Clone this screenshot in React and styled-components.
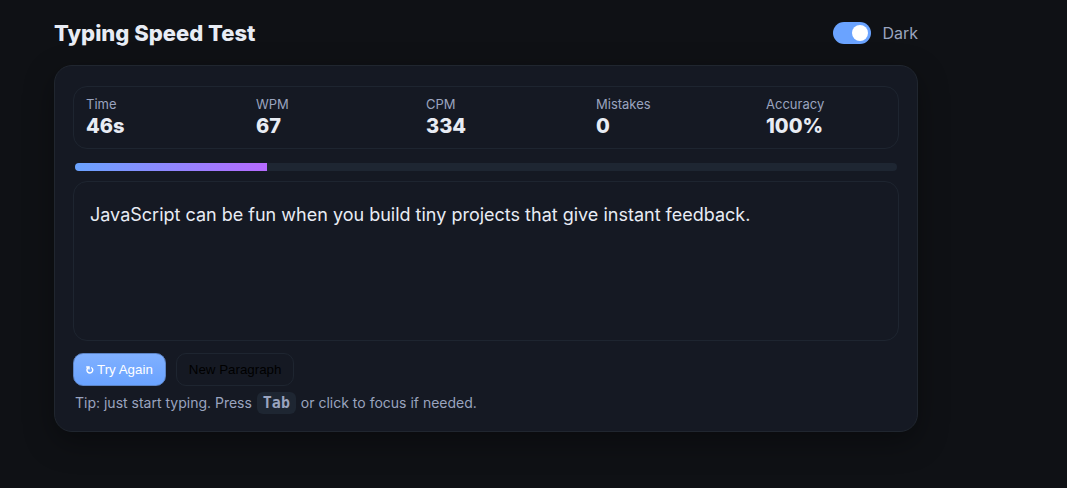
import React, { useState } from "react";
import styled, { createGlobalStyle } from "styled-components";

const GlobalStyle = createGlobalStyle`
  * { box-sizing: border-box; }
  html { min-height: 100%; background: #0f1115; }
  body {
    margin: 0;
    color: #e8ecf4;
    font-family: Inter, "Liberation Sans", sans-serif;
    font-size: 16px;
    line-height: 24px;
  }
`;

const Page = styled.main`
  padding: 20px 149px 56px 54px;
`;

const Header = styled.header`
  display: flex;
  align-items: center;
  justify-content: space-between;
  margin-bottom: 19px;
`;

const Title = styled.h1`
  margin: 0;
  font-size: 22px;
  line-height: 26px;
  font-weight: 800;
`;

const ThemeToggle = styled.label`
  display: flex;
  align-items: center;
  gap: 11px;
  color: #9aa4bf;
  cursor: pointer;
`;

const Switch = styled.input`
  appearance: none;
  display: flex;
  align-items: center;
  width: 38px;
  height: 22px;
  margin: 0;
  padding: 0 3px;
  border-radius: 11px;
  background: #1e2632;
  cursor: pointer;

  &::before {
    content: "";
    width: 16px;
    height: 16px;
    border-radius: 50%;
    background: #fff;
  }

  &:checked {
    justify-content: flex-end;
    background: #6aa3ff;
  }
`;

const Card = styled.section`
  padding: 20px 18px 17px;
  border: 1px solid #20262f;
  border-radius: 18px;
  background: #151923;
  box-shadow: 0 10px 30px rgba(0, 0, 0, 0.35);
`;

const Stats = styled.dl`
  display: grid;
  grid-template-columns: repeat(5, 1fr);
  column-gap: 50px;
  margin: 0 0 14px;
  padding: 8px 12px;
  border: 1px solid #1e2530;
  border-radius: 14px;
`;

const Stat = styled.div`
  min-width: 0;
`;

const StatLabel = styled.dt`
  font-size: 13px;
  line-height: 18px;
  color: #9aa4bf;
`;

const StatValue = styled.dd`
  margin: 0;
  font-size: 20px;
  line-height: 27px;
  font-weight: 800;
`;

const Track = styled.div`
  height: 8px;
  margin: 0 2px 10px;
  overflow: hidden;
  border-radius: 4px;
  background: #1e2632;
`;

const Fill = styled.div`
  height: 100%;
  background: linear-gradient(90deg, #6aa3ff, #b66aff);
`;

const Passage = styled.p`
  min-height: 160px;
  margin: 0 0 12px;
  padding: 17px 16px;
  border: 1px solid #1e2530;
  border-radius: 14px;
  font-size: 18px;
  line-height: 32px;
`;

const Actions = styled.div`
  display: flex;
  gap: 10px;
`;

const Button = styled.button`
  display: flex;
  align-items: center;
  gap: 3px;
  padding: 8px 12px;
  border: 1px solid ${(p) => (p.$primary ? "#5c84c6" : "#1e2530")};
  border-radius: 10px;
  background: ${(p) => (p.$primary ? "linear-gradient(#80b0ff, #6aa3ff)" : "transparent")};
  color: ${(p) => (p.$primary ? "#fff" : "#000")};
  font-family: "Liberation Sans", Arial, sans-serif;
  line-height: 15px;
  cursor: pointer;
`;

const Tip = styled.p`
  margin: 6px 2px 0;
  font-size: 14px;
  line-height: 22px;
  color: #9aa4bf;
`;

const Key = styled.kbd`
  margin: 0 1px;
  padding: 2px 6px;
  border-radius: 6px;
  background: #1e2632;
  font-family: "DejaVu Sans Mono", "Liberation Mono", monospace;
  font-size: 15px;
  font-weight: 700;
`;

const stats = [
  ["Time", "46s"],
  ["WPM", "67"],
  ["CPM", "334"],
  ["Mistakes", "0"],
  ["Accuracy", "100%"],
];

const elapsed = 14;
const duration = 60;

function RetryIcon() {
  return (
    <svg width="8" height="9" viewBox="0 0 8 9" fill="none" stroke="currentColor" strokeWidth="1.4" aria-hidden="true">
      <path d="M2.3 2.6A2.9 2.9 0 1 0 5.2 2.5" />
      <path d="M0.2 2H3V4.4" />
    </svg>
  );
}

export default function App() {
  const [dark, setDark] = useState(true);
  return (
    <>
      <GlobalStyle />
      <Page>
        <Header>
          <Title>Typing Speed Test</Title>
          <ThemeToggle>
            <Switch type="checkbox" checked={dark} onChange={(e) => setDark(e.target.checked)} />
            Dark
          </ThemeToggle>
        </Header>
        <Card>
          <Stats>
            {stats.map(([label, value]) => (
              <Stat key={label}>
                <StatLabel>{label}</StatLabel>
                <StatValue>{value}</StatValue>
              </Stat>
            ))}
          </Stats>
          <Track>
            <Fill style={{ width: `${(elapsed / duration) * 100}%` }} />
          </Track>
          <Passage>JavaScript can be fun when you build tiny projects that give instant feedback.</Passage>
          <Actions>
            <Button type="button" $primary>
              <RetryIcon />
              Try Again
            </Button>
            <Button type="button">New Paragraph</Button>
          </Actions>
          <Tip>
            Tip: just start typing. Press <Key>Tab</Key> or click to focus if needed.
          </Tip>
        </Card>
      </Page>
    </>
  );
}
